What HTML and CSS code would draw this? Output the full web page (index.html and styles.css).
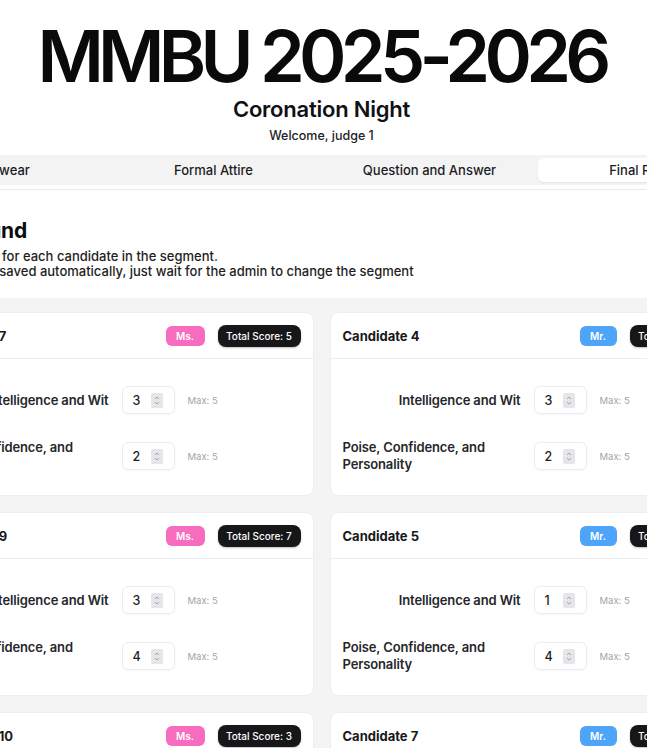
FILE: index.html
```html
<!DOCTYPE html>
<html lang="en">
<head>
<meta charset="utf-8">
<title>MMBU 2025-2026 Judging</title>
<link rel="stylesheet" href="styles.css">
</head>
<body>
<div class="viewport">
  <div class="page">
    <header class="hero">
      <h1 class="hero-title">MMBU 2025-2026</h1>
      <h2 class="hero-sub">Coronation Night</h2>
      <p class="hero-welcome">Welcome, judge 1</p>
    </header>

    <nav class="tabs">
      <button class="tab">Swimwear</button>
      <button class="tab">Formal Attire</button>
      <button class="tab">Question and Answer</button>
      <button class="tab tab-active">Final Round</button>
    </nav>

    <section class="panel">
      <div class="panel-head">
        <h3 class="panel-title">Final Round</h3>
        <p class="panel-desc">Set the scores for each candidate in the segment.</p>
        <p class="panel-desc">Scores will be saved automatically, just wait for the admin to change the segment</p>
      </div>

      <div class="grid">
        <div class="column">
          <article class="card">
            <div class="card-head">
              <span class="card-name">Candidate 7</span>
              <div class="badges"><span class="badge badge-ms">Ms.</span><span class="badge badge-total">Total Score: 5</span></div>
            </div>
            <div class="card-body">
              <label class="crit">Intelligence and Wit</label>
              <div class="num"><span class="num-val">3</span><svg class="spin" width="12" height="15" viewBox="0 0 12 15"><rect width="12" height="15" rx="2" fill="#e6e6ea"/><path d="M4 6 L6 4 L8 6 M4 9 L6 11 L8 9" fill="none" stroke="#a3a3aa" stroke-width="1"/></svg></div>
              <span class="max">Max: 5</span>
              <label class="crit">Poise, Confidence, and Personality</label>
              <div class="num"><span class="num-val">2</span><svg class="spin" width="12" height="15" viewBox="0 0 12 15"><rect width="12" height="15" rx="2" fill="#e6e6ea"/><path d="M4 6 L6 4 L8 6 M4 9 L6 11 L8 9" fill="none" stroke="#a3a3aa" stroke-width="1"/></svg></div>
              <span class="max">Max: 5</span>
            </div>
          </article>

          <article class="card">
            <div class="card-head">
              <span class="card-name">Candidate 9</span>
              <div class="badges"><span class="badge badge-ms">Ms.</span><span class="badge badge-total">Total Score: 7</span></div>
            </div>
            <div class="card-body">
              <label class="crit">Intelligence and Wit</label>
              <div class="num"><span class="num-val">3</span><svg class="spin" width="12" height="15" viewBox="0 0 12 15"><rect width="12" height="15" rx="2" fill="#e6e6ea"/><path d="M4 6 L6 4 L8 6 M4 9 L6 11 L8 9" fill="none" stroke="#a3a3aa" stroke-width="1"/></svg></div>
              <span class="max">Max: 5</span>
              <label class="crit">Poise, Confidence, and Personality</label>
              <div class="num"><span class="num-val">4</span><svg class="spin" width="12" height="15" viewBox="0 0 12 15"><rect width="12" height="15" rx="2" fill="#e6e6ea"/><path d="M4 6 L6 4 L8 6 M4 9 L6 11 L8 9" fill="none" stroke="#a3a3aa" stroke-width="1"/></svg></div>
              <span class="max">Max: 5</span>
            </div>
          </article>

          <article class="card">
            <div class="card-head">
              <span class="card-name">Candidate 10</span>
              <div class="badges"><span class="badge badge-ms">Ms.</span><span class="badge badge-total">Total Score: 3</span></div>
            </div>
            <div class="card-body">
              <label class="crit">Intelligence and Wit</label>
              <div class="num"><span class="num-val">2</span><svg class="spin" width="12" height="15" viewBox="0 0 12 15"><rect width="12" height="15" rx="2" fill="#e6e6ea"/><path d="M4 6 L6 4 L8 6 M4 9 L6 11 L8 9" fill="none" stroke="#a3a3aa" stroke-width="1"/></svg></div>
              <span class="max">Max: 5</span>
              <label class="crit">Poise, Confidence, and Personality</label>
              <div class="num"><span class="num-val">1</span><svg class="spin" width="12" height="15" viewBox="0 0 12 15"><rect width="12" height="15" rx="2" fill="#e6e6ea"/><path d="M4 6 L6 4 L8 6 M4 9 L6 11 L8 9" fill="none" stroke="#a3a3aa" stroke-width="1"/></svg></div>
              <span class="max">Max: 5</span>
            </div>
          </article>
        </div>

        <div class="column">
          <article class="card">
            <div class="card-head">
              <span class="card-name">Candidate 4</span>
              <div class="badges"><span class="badge badge-mr">Mr.</span><span class="badge badge-total">Total Score: 5</span></div>
            </div>
            <div class="card-body">
              <label class="crit">Intelligence and Wit</label>
              <div class="num"><span class="num-val">3</span><svg class="spin" width="12" height="15" viewBox="0 0 12 15"><rect width="12" height="15" rx="2" fill="#e6e6ea"/><path d="M4 6 L6 4 L8 6 M4 9 L6 11 L8 9" fill="none" stroke="#a3a3aa" stroke-width="1"/></svg></div>
              <span class="max">Max: 5</span>
              <label class="crit">Poise, Confidence, and Personality</label>
              <div class="num"><span class="num-val">2</span><svg class="spin" width="12" height="15" viewBox="0 0 12 15"><rect width="12" height="15" rx="2" fill="#e6e6ea"/><path d="M4 6 L6 4 L8 6 M4 9 L6 11 L8 9" fill="none" stroke="#a3a3aa" stroke-width="1"/></svg></div>
              <span class="max">Max: 5</span>
            </div>
          </article>

          <article class="card">
            <div class="card-head">
              <span class="card-name">Candidate 5</span>
              <div class="badges"><span class="badge badge-mr">Mr.</span><span class="badge badge-total">Total Score: 5</span></div>
            </div>
            <div class="card-body">
              <label class="crit">Intelligence and Wit</label>
              <div class="num"><span class="num-val">1</span><svg class="spin" width="12" height="15" viewBox="0 0 12 15"><rect width="12" height="15" rx="2" fill="#e6e6ea"/><path d="M4 6 L6 4 L8 6 M4 9 L6 11 L8 9" fill="none" stroke="#a3a3aa" stroke-width="1"/></svg></div>
              <span class="max">Max: 5</span>
              <label class="crit">Poise, Confidence, and Personality</label>
              <div class="num"><span class="num-val">4</span><svg class="spin" width="12" height="15" viewBox="0 0 12 15"><rect width="12" height="15" rx="2" fill="#e6e6ea"/><path d="M4 6 L6 4 L8 6 M4 9 L6 11 L8 9" fill="none" stroke="#a3a3aa" stroke-width="1"/></svg></div>
              <span class="max">Max: 5</span>
            </div>
          </article>

          <article class="card">
            <div class="card-head">
              <span class="card-name">Candidate 7</span>
              <div class="badges"><span class="badge badge-mr">Mr.</span><span class="badge badge-total">Total Score: 6</span></div>
            </div>
            <div class="card-body">
              <label class="crit">Intelligence and Wit</label>
              <div class="num"><span class="num-val">3</span><svg class="spin" width="12" height="15" viewBox="0 0 12 15"><rect width="12" height="15" rx="2" fill="#e6e6ea"/><path d="M4 6 L6 4 L8 6 M4 9 L6 11 L8 9" fill="none" stroke="#a3a3aa" stroke-width="1"/></svg></div>
              <span class="max">Max: 5</span>
              <label class="crit">Poise, Confidence, and Personality</label>
              <div class="num"><span class="num-val">3</span><svg class="spin" width="12" height="15" viewBox="0 0 12 15"><rect width="12" height="15" rx="2" fill="#e6e6ea"/><path d="M4 6 L6 4 L8 6 M4 9 L6 11 L8 9" fill="none" stroke="#a3a3aa" stroke-width="1"/></svg></div>
              <span class="max">Max: 5</span>
            </div>
          </article>
        </div>
      </div>
    </section>
  </div>
</div>
</body>
</html>
```

FILE: styles.css
```css
* { box-sizing: border-box; }

html, body {
  margin: 0;
  padding: 0;
  background: #ffffff;
  overflow: hidden;
}

body {
  font-family: Inter, "Noto Sans", "Liberation Sans", sans-serif;
  color: #18181b;
}

.viewport {
  display: flex;
  justify-content: center;
  width: 647px;
  padding-right: 4px;
}

.page {
  flex: 0 0 870px;
  width: 870px;
}

.hero {
  display: flex;
  flex-direction: column;
  align-items: center;
  padding-top: 19px;
}

.hero-title {
  margin: 0;
  font-size: 72px;
  line-height: 73px;
  font-weight: 600;
  letter-spacing: -0.08em;
  color: #0a0a0a;
}

.hero-sub {
  margin: 3px 0 0;
  font-size: 22px;
  line-height: 28px;
  font-weight: 600;
  letter-spacing: -0.01em;
  color: #111113;
}

.hero-welcome {
  margin: 5px 0 0;
  font-size: 12.5px;
  line-height: 16px;
  font-weight: 500;
  color: #222225;
}

.tabs {
  display: grid;
  grid-template-columns: repeat(4, 1fr);
  margin-top: 11px;
  height: 30px;
  padding: 3px;
  background: #f3f3f4;
  border-radius: 8px;
}

.tab {
  border: 0;
  background: transparent;
  font-family: inherit;
  font-size: 13px;
  font-weight: 500;
  color: #1c1c1f;
  border-radius: 6px;
  padding: 0;
}

.tab-active {
  background: #ffffff;
  box-shadow: 0 1px 2px rgba(0, 0, 0, 0.06);
}

.panel {
  margin-top: 4px;
  border: 1px solid #ececee;
  border-radius: 8px;
  overflow: hidden;
}

.panel-head {
  padding: 27px 22px 19px;
}

.panel-title {
  margin: 0 0 4px;
  font-size: 21px;
  line-height: 28px;
  font-weight: 700;
  letter-spacing: -0.01em;
  color: #0c0c0e;
}

.panel-desc {
  margin: 0;
  font-size: 13px;
  line-height: 15px;
  font-weight: 500;
  color: #1e1e22;
}

.grid {
  display: grid;
  grid-template-columns: 1fr 1fr;
  column-gap: 16px;
  padding: 14px 30px 30px;
  background: #f4f4f5;
}

.column {
  display: flex;
  flex-direction: column;
  gap: 16px;
}

.card {
  background: #ffffff;
  border: 1px solid #ededef;
  border-radius: 8px;
}

.card-head {
  display: flex;
  align-items: center;
  justify-content: space-between;
  height: 46px;
  padding: 0 12px 0 12px;
  border-bottom: 1px solid #ececee;
}

.card-name {
  font-size: 13px;
  font-weight: 700;
  color: #18181b;
}

.badges {
  display: flex;
  align-items: center;
  gap: 13px;
}

.badge {
  display: inline-flex;
  align-items: center;
  justify-content: center;
  font-size: 10px;
  font-weight: 600;
  color: #ffffff;
}

.badge-ms {
  height: 20px;
  width: 39px;
  border-radius: 6px;
  background: #f76cbf;
}

.badge-mr {
  height: 20px;
  width: 37px;
  border-radius: 6px;
  background: #4ea4f8;
}

.badge-total {
  height: 22px;
  width: 83px;
  border-radius: 8px;
  background: #17171a;
  font-weight: 500;
  box-shadow: 0 1px 2px rgba(0, 0, 0, 0.25);
}

.card-body {
  display: grid;
  grid-template-columns: 178px 53px auto;
  column-gap: 13px;
  row-gap: 25px;
  align-items: center;
  padding: 27px 12px 22px 12px;
}

.crit {
  justify-self: end;
  font-size: 13px;
  line-height: 17px;
  font-weight: 600;
  letter-spacing: -0.01em;
  color: #26262a;
}

.num {
  display: flex;
  align-items: center;
  height: 28px;
  padding-left: 10px;
  gap: 8px;
  border: 1px solid #ececee;
  border-radius: 6px;
  box-shadow: 0 1px 2px rgba(0, 0, 0, 0.04);
  font-size: 12.5px;
  font-weight: 500;
  color: #1f1f23;
}

.num-val {
  width: 10px;
}

.spin {
  display: block;
}

.max {
  font-size: 9.5px;
  color: #a3a3aa;
}
```
